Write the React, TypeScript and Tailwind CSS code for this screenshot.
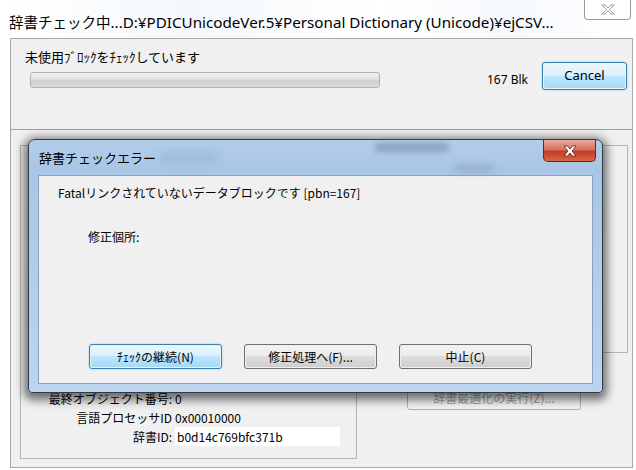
import React from "react";

const ui = { fontFamily: '"Noto Sans", "Noto Sans CJK JP", sans-serif' };
const jp = { fontFamily: '"Noto Sans CJK JP", sans-serif' };

function WinButton({
  label,
  width,
  focused = false,
  disabled = false,
}: {
  label: string;
  width: string;
  focused?: boolean;
  disabled?: boolean;
}) {
  if (disabled) {
    return (
      <div
        className={`${width} h-[25px] rounded-[3px] border border-[#adb2b5] bg-[#f4f4f4] flex items-center justify-center text-[12px] text-[#a0a0a0]`}
        style={jp}
      >
        {label}
      </div>
    );
  }
  if (focused) {
    return (
      <div
        className={`${width} h-[25px] rounded-[3px] border border-[#3c7fb1] p-px shadow-[0_0_2px_#7ec4f0]`}
      >
        <div
          className="h-full rounded-[2px] bg-[linear-gradient(#eaf6fd_0%,#d9f0fc_50%,#bee6fd_50%,#a7d9f5_100%)] flex items-center justify-center text-[12px] text-black"
          style={jp}
        >
          {label}
        </div>
      </div>
    );
  }
  return (
    <div className={`${width} h-[25px] rounded-[3px] border border-[#707070] p-px`}>
      <div
        className="h-full rounded-[2px] bg-[linear-gradient(#f2f2f2_0%,#ebebeb_50%,#dddddd_50%,#cfcfcf_100%)] flex items-center justify-center text-[12px] text-black"
        style={jp}
      >
        {label}
      </div>
    </div>
  );
}

function InfoRow({ label, value, boxed = false }: { label: string; value: string; boxed?: boolean }) {
  return (
    <div className="flex items-center h-[19px]">
      <div className="w-[150px] text-right text-[12px] text-black pr-[3px] whitespace-nowrap" style={jp}>
        {label}
      </div>
      <div
        className={`h-[19px] flex items-center text-[12px] text-black ${boxed ? "w-[165px] bg-white pl-[2px]" : ""}`}
        style={jp}
      >
        {value}
      </div>
    </div>
  );
}

export default function App() {
  return (
    <div className="relative w-[636px] h-[470px] overflow-hidden bg-white">
      {/* outer window caption */}
      <div className="relative h-[38px] flex items-start bg-[linear-gradient(90deg,#ffffff_0%,#f4f8fc_30%,#ffffff_60%,#f6f9fd_80%,#ffffff_100%)]">
        <div className="pl-[9px] pt-[12px] text-[15.2px] leading-[20px] text-black whitespace-nowrap" style={ui}>
          <span className="text-[14.5px]">辞書チェック中</span>...D:¥PDICUnicodeVer.5¥Personal Dictionary (Unicode)¥ejCSV...
        </div>
        <div className="ml-auto mr-[5px] mt-0 w-[47px] h-[20px] rounded-b-[4px] border border-t-0 border-[#9b9b9b] bg-white flex items-center justify-center">
          <svg width="14" height="11" viewBox="0 0 14 11">
            <path
              d="M1 1 L4 1 L7 4 L10 1 L13 1 L8.5 5.5 L13 10 L10 10 L7 7 L4 10 L1 10 L5.5 5.5 Z"
              fill="#ffffff"
              stroke="#9a9a9a"
              strokeWidth="1"
              strokeLinejoin="round"
            />
          </svg>
        </div>
      </div>

      {/* outer window client area */}
      <div className="ml-[10px] mr-[3px] h-[430px] border border-[#a8a8a8] bg-[#f0f0f0] flex flex-col">
        {/* progress section */}
        <div className="h-[91px] border-b border-[#a0a0a0] pl-[14px] pr-[5px] pt-[9px] flex flex-col">
          <div className="text-[13px] leading-[18px] text-black" style={jp}>
            未使用ﾌﾞﾛｯｸをﾁｪｯｸしています
          </div>
          <div className="flex items-center mt-[4px]">
            <div className="ml-[5px] w-[350px] h-[16px] rounded-[3px] border border-[#b2b2b2] bg-[linear-gradient(#f3f3f3_0%,#e2e2e2_45%,#cdcdcd_55%,#dcdcdc_100%)]" />
            <div className="ml-auto mr-[14px] text-[12px] text-black" style={ui}>
              167 Blk
            </div>
            <div className="w-[85px] h-[28px] rounded-[3px] border border-[#3c7fb1] p-px shadow-[0_0_2px_#7ec4f0] -mt-[8px]">
              <div
                className="h-full rounded-[2px] bg-[linear-gradient(#eaf6fd_0%,#d9f0fc_50%,#bee6fd_50%,#a7d9f5_100%)] flex items-center justify-center text-[13px] text-black"
                style={ui}
              >
                Cancel
              </div>
            </div>
          </div>
        </div>

        {/* dictionary information section */}
        <div className="flex-1 flex pl-[9px] pr-[4px] pt-[15px] pb-[8px] gap-[8px]">
          <div className="w-[337px] border border-[#b4b4b4] flex flex-col justify-end pb-[12px] pl-[4px]">
            <InfoRow label="最終オブジェクト番号:" value="0" />
            <InfoRow label="言語プロセッサID" value="0x00010000" />
            <InfoRow label="辞書ID:" value="b0d14c769bfc371b" boxed />
          </div>
          <div className="flex-1 flex flex-col">
            <div className="h-[208px] border border-[#b4b4b4]" />
            <div className="mt-[32px] ml-[42px]">
              <WinButton label="辞書最適化の実行(Z)..." width="w-[174px]" disabled />
            </div>
          </div>
        </div>
      </div>

      {/* error dialog */}
      <div className="absolute left-[28px] top-[139px] w-[575px] h-[254px] rounded-t-[7px] rounded-b-[4px] border border-[#2d3a48] bg-[linear-gradient(180deg,#b3cde9_0%,#a9c6e6_12%,#bcd5ee_100%)] shadow-[0_3px_10px_4px_rgba(0,0,0,0.55)] flex flex-col">
        <div className="relative h-[35px] flex items-start">
          {/* blurred shapes of the window behind the glass */}
          <div className="absolute left-[130px] top-[12px] w-[60px] h-[10px] rounded-full bg-[#93b1d4] blur-[4px] opacity-60" />
          <div className="absolute left-[345px] top-[3px] w-[75px] h-[9px] rounded-full bg-[#6f88a4] blur-[3px] opacity-60" />
          <div className="absolute left-[425px] top-[24px] w-[40px] h-[8px] rounded-full bg-[#8aa2bd] blur-[3px] opacity-60" />
          <div className="relative pl-[10px] pt-[9px] text-[13px] leading-[18px] text-black" style={jp}>
            辞書チェックエラー
          </div>
          <div className="relative ml-auto mr-[6px] w-[53px] h-[22px] rounded-b-[5px] border border-t-0 border-[#5a2a24] bg-[linear-gradient(#e9a99a_0%,#d7735f_45%,#c13c24_55%,#d56a46_100%)] flex items-center justify-center">
            <svg width="14" height="12" viewBox="0 0 14 12">
              <path
                d="M1 1 L4.5 1 L7 4 L9.5 1 L13 1 L9 6 L13 11 L9.5 11 L7 8 L4.5 11 L1 11 L5 6 Z"
                fill="#ffffff"
                stroke="#6b2b20"
                strokeWidth="0.9"
                strokeLinejoin="round"
              />
            </svg>
          </div>
        </div>
        <div className="mx-[9px] mb-[8px] flex-1 border border-[#8aa2bf] bg-[#f0f0f0] flex flex-col">
          <div className="pl-[19px] pt-[8px] text-[12px] leading-[18px] text-black" style={jp}>
            Fatalリンクされていないデータブロックです [pbn=167]
          </div>
          <div className="pl-[49px] pt-[26px] text-[12px] leading-[18px] text-black" style={jp}>
            修正個所:
          </div>
          <div className="mt-auto mb-[14px] pl-[50px] flex gap-[22px]">
            <WinButton label="ﾁｪｯｸの継続(N)" width="w-[133px]" focused />
            <WinButton label="修正処理へ(F)..." width="w-[133px]" />
            <WinButton label="中止(C)" width="w-[133px]" />
          </div>
        </div>
      </div>
    </div>
  );
}
